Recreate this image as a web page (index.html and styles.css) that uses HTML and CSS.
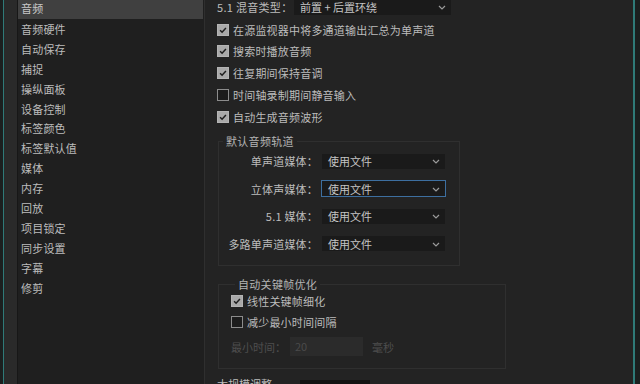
FILE: index.html
```html
<!DOCTYPE html>
<html lang="zh-CN">
<head>
<meta charset="utf-8">
<link rel="stylesheet" href="styles.css">
</head>
<body>
<div class="app">
  <div class="edge-left"></div>
  <div class="side-strip"></div>
  <ul class="cat-list">
    <li class="sel">音频</li>
    <li>音频硬件</li>
    <li>自动保存</li>
    <li>捕捉</li>
    <li>操纵面板</li>
    <li>设备控制</li>
    <li>标签颜色</li>
    <li>标签默认值</li>
    <li>媒体</li>
    <li>内存</li>
    <li>回放</li>
    <li>项目锁定</li>
    <li>同步设置</li>
    <li>字幕</li>
    <li>修剪</li>
  </ul>
  <div class="content">
    <div class="mix-row">
      <span class="mix-label">5.1 混音类型：</span>
      <div class="select wide"><span>前置 + 后置环绕</span><svg class="chev" viewBox="0 0 8 5"><path d="M1 1l3 3 3-3"/></svg></div>
    </div>
    <div class="checks">
      <label class="chk on"><span class="box"><svg viewBox="0 0 12 12"><path d="M2.5 6.2l2.4 2.4 4.6-5"/></svg></span>在源监视器中将多通道输出汇总为单声道</label>
      <label class="chk on"><span class="box"><svg viewBox="0 0 12 12"><path d="M2.5 6.2l2.4 2.4 4.6-5"/></svg></span>搜索时播放音频</label>
      <label class="chk on"><span class="box"><svg viewBox="0 0 12 12"><path d="M2.5 6.2l2.4 2.4 4.6-5"/></svg></span>往复期间保持音调</label>
      <label class="chk"><span class="box"></span>时间轴录制期间静音输入</label>
      <label class="chk on"><span class="box"><svg viewBox="0 0 12 12"><path d="M2.5 6.2l2.4 2.4 4.6-5"/></svg></span>自动生成音频波形</label>
    </div>
    <fieldset class="group g1">
      <legend>默认音频轨道</legend>
      <div class="frow"><span class="flabel">单声道媒体：</span><div class="select"><span>使用文件</span><svg class="chev" viewBox="0 0 8 5"><path d="M1 1l3 3 3-3"/></svg></div></div>
      <div class="frow"><span class="flabel">立体声媒体：</span><div class="select focus"><span>使用文件</span><svg class="chev" viewBox="0 0 8 5"><path d="M1 1l3 3 3-3"/></svg></div></div>
      <div class="frow"><span class="flabel">5.1 媒体：</span><div class="select"><span>使用文件</span><svg class="chev" viewBox="0 0 8 5"><path d="M1 1l3 3 3-3"/></svg></div></div>
      <div class="frow"><span class="flabel">多路单声道媒体：</span><div class="select"><span>使用文件</span><svg class="chev" viewBox="0 0 8 5"><path d="M1 1l3 3 3-3"/></svg></div></div>
    </fieldset>
    <fieldset class="group g2">
      <legend>自动关键帧优化</legend>
      <label class="chk on"><span class="box"><svg viewBox="0 0 12 12"><path d="M2.5 6.2l2.4 2.4 4.6-5"/></svg></span>线性关键帧细化</label>
      <label class="chk"><span class="box"></span>减少最小时间间隔</label>
      <div class="mintime"><span>最小时间：</span><div class="numbox">20</div><span>毫秒</span></div>
    </fieldset>
    <div class="last-row"><span class="last-label">大规模调整</span><div class="darkbox"></div></div>
  </div>
  <div class="edge-right"></div>
</div>
</body>
</html>
```

FILE: styles.css
```css
* { box-sizing: border-box; }
html, body {
  margin: 0;
  padding: 0;
  width: 640px;
  height: 384px;
  overflow: hidden;
  background: #232323;
  font-family: "Noto Sans CJK SC", "Noto Sans", sans-serif;
  font-size: 11px;
  color: #bcbcbc;
}
.app {
  display: flex;
  height: 384px;
}
.edge-left {
  width: 4px;
  background: #1b1f1f;
  border-right: 1px solid #2f7a78;
  flex: none;
}
.side-strip {
  width: 13px;
  background: #2a2a2a;
  flex: none;
}
.cat-list {
  list-style: none;
  margin: 0;
  padding: 0;
  width: 188px;
  flex: none;
  background: #1f1f1f;
  border-left: 1px solid #171717;
  border-right: 1px solid #2f2f2f;
}
.cat-list li {
  height: 19.9px;
  line-height: 20px;
  padding-left: 3px;
  margin-right: 1px;
  letter-spacing: 0.2px;
}
.cat-list li.sel {
  background: #404040;
  color: #c8c8c8;
  margin-top: -1px;
  height: 20px;
  line-height: 19px;
}
.content {
  flex: 1;
  padding-left: 12px;
  display: flex;
  flex-direction: column;
  align-items: flex-start;
  overflow: hidden;
}
.content > * {
  flex: none;
}
.mix-row {
  display: flex;
  align-items: center;
  margin-top: -3px;
  height: 19px;
}
.mix-label {
  width: 76px;
  letter-spacing: 0.3px;
}
.select {
  position: relative;
  display: flex;
  align-items: center;
  width: 125px;
  height: 17px;
  background: #1a1a1a;
  border: 1px solid #232323;
  padding-left: 6px;
  color: #c4c4c4;
}
.select.wide {
  width: 159px;
  height: 19px;
}
.select.focus {
  border-color: #3d6fa0;
}
.chev {
  position: absolute;
  right: 5px;
  top: 50%;
  width: 8px;
  height: 5px;
  margin-top: -2px;
  fill: none;
  stroke: #9a9a9a;
  stroke-width: 1.2;
}
.checks {
  display: flex;
  flex-direction: column;
  gap: 4.75px;
  margin-top: 5px;
}
.chk {
  display: flex;
  align-items: center;
  height: 17px;
  letter-spacing: 0.2px;
}
.box {
  width: 12px;
  height: 12px;
  border: 1px solid #8c8c8c;
  background: #1c1c1c;
  margin-right: 4px;
  display: flex;
  flex: none;
}
.chk.on .box {
  background: #a9a9a9;
  border-color: #b4b4b4;
}
.box svg {
  width: 10px;
  height: 10px;
  fill: none;
  stroke: #1e1e1e;
  stroke-width: 1.8;
}
.group {
  margin: 0 0 0 1px;
  border: 1px solid #2f2f2f;
  padding: 0;
}
.group legend {
  padding: 0 3px;
  margin-left: 4px;
  color: #b4b4b4;
  letter-spacing: 0.3px;
  line-height: 14px;
}
.g1 {
  margin-top: 9px;
  width: 242px;
  height: 132px;
  padding-top: 4px;
  display: flex;
  flex-direction: column;
  gap: 9.6px;
}
.frow {
  display: flex;
  align-items: center;
  height: 18px;
}
.flabel {
  width: 102px;
  text-align: right;
  padding-right: 3px;
  letter-spacing: 0.2px;
}
.g2 {
  margin-top: 11px;
  width: 288px;
  height: 92px;
  padding-left: 12px;
  padding-top: 1px;
  display: flex;
  flex-direction: column;
  gap: 4px;
}
.mintime {
  display: flex;
  align-items: center;
  color: #4e4e4e;
  margin-top: 3px;
  height: 19px;
}
.mintime span:first-child {
  width: 59px;
}
.numbox {
  width: 73px;
  height: 19px;
  background: #2b2b2b;
  padding-left: 5px;
  line-height: 19px;
  color: #4a4a4a;
  margin-right: 9px;
}
.last-row {
  display: flex;
  align-items: flex-start;
  margin-top: 8px;
}
.last-label {
  width: 83px;
  color: #bcbcbc;
  line-height: 14px;
}
.darkbox {
  width: 70px;
  height: 20px;
  background: #121212;
  margin-top: 3px;
}
.edge-right {
  width: 7px;
  flex: none;
  background: #1b1f1f;
  border-left: 2px solid #2f7a78;
}
```
